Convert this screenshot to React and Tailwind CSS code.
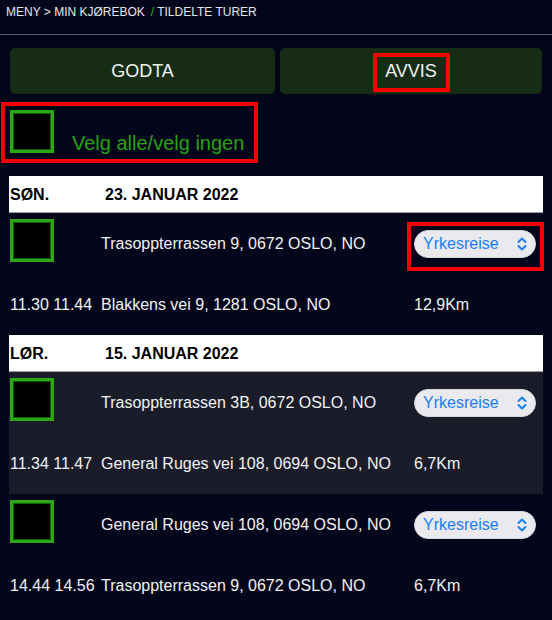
const font = "font-[family-name:'Liberation_Sans',Arial,sans-serif]";

function Box() {
  return (
    <div className="w-[44px] h-[43px] border-[3px] border-[#2ca717] bg-black shadow-[inset_0_0_0_1px_#146009]" />
  );
}

function Chevrons() {
  return (
    <svg width="10" height="14" viewBox="0 0 10 14" fill="none" stroke="#1b7ef7" strokeWidth="2" strokeLinecap="round" strokeLinejoin="round">
      <path d="M1.5 5 L5 1.5 L8.5 5" />
      <path d="M1.5 9 L5 12.5 L8.5 9" />
    </svg>
  );
}

function Select({ marked }) {
  return (
    <div className="relative w-[122px] h-[28px] rounded-full bg-[#e9e9ee] border border-[#d6d6dc] flex items-center justify-between pl-[8px] pr-[8px] text-[16px] text-[#1b7ef7]">
      <span>Yrkesreise</span>
      <Chevrons />
      {marked && (
        <div className="absolute -left-[8px] -top-[9px] w-[137px] h-[49px] border-4 border-[#f50000]" />
      )}
    </div>
  );
}

function Header({ day, date }) {
  return (
    <div className="h-[37px] bg-white border-b border-[#a0a0a6] flex items-center pt-[2px] text-[16px] font-bold text-black">
      <div className="w-[96px] pl-[1px]">{day}</div>
      <div>{date}</div>
    </div>
  );
}

function Trip({ from, to, times, km, marked }) {
  return (
    <div>
      <div className="h-[61px] flex">
        <div className="w-[92px] pl-[1px] pt-[6px]">
          <Box />
        </div>
        <div className="w-[313px] flex items-center text-[16px] text-[#f2f2f2]">{from}</div>
        <div className="flex items-center">
          <Select marked={marked} />
        </div>
      </div>
      <div className="h-[61px] flex items-center text-[16px] text-[#f2f2f2]">
        <div className="w-[92px] pl-[1px]">{times}</div>
        <div className="w-[313px]">{to}</div>
        <div>{km}</div>
      </div>
    </div>
  );
}

export default function App() {
  return (
    <div className={`w-[552px] h-[620px] overflow-hidden bg-[#03061a] text-white ${font}`}>
      <div className="h-[35px] border-b border-[#5b5d66] pl-[6px] pt-[5px] text-[12px] leading-[14px] text-[#e6e6e6]">
        MENY &gt; MIN KJØREBOK<span className="text-[#2eb31a] ml-[6px] mr-[3px]">/</span>TILDELTE TURER
      </div>

      <div className="flex gap-[5px] pl-[10px] mt-[13px]">
        <div className="w-[265px] h-[46px] rounded-[5px] bg-[#172c15] flex items-center justify-center text-[18px] text-[#f2f2f2]">
          GODTA
        </div>
        <div className="relative w-[262px] h-[46px] rounded-[5px] bg-[#172c15] flex items-center justify-center text-[18px] text-[#f2f2f2]">
          AVVIS
          <div className="absolute left-[93px] top-[5px] w-[77px] h-[39px] border-4 border-[#f50000]" />
        </div>
      </div>

      <div className="mt-[8px] ml-[1px] w-[257px] h-[61px] border-4 border-[#f50000] flex">
        <div className="ml-[5px] mt-[4px]">
          <Box />
        </div>
        <div className="ml-[18px] mt-[26px] text-[20px] leading-[23px] text-[#27a112]">Velg alle/velg ingen</div>
      </div>

      <div className="mx-[9px] mt-[13px]">
        <Header day="SØN." date="23. JANUAR 2022" />
        <Trip
          from="Trasoppterrassen 9, 0672 OSLO, NO"
          to="Blakkens vei 9, 1281 OSLO, NO"
          times="11.30 11.44"
          km="12,9Km"
          marked
        />
        <Header day="LØR." date="15. JANUAR 2022" />
        <div className="bg-[#1a1c2a]">
          <Trip
            from="Trasoppterrassen 3B, 0672 OSLO, NO"
            to="General Ruges vei 108, 0694 OSLO, NO"
            times="11.34 11.47"
            km="6,7Km"
          />
        </div>
        <Trip
          from="General Ruges vei 108, 0694 OSLO, NO"
          to="Trasoppterrassen 9, 0672 OSLO, NO"
          times="14.44 14.56"
          km="6,7Km"
        />
      </div>
    </div>
  );
}
